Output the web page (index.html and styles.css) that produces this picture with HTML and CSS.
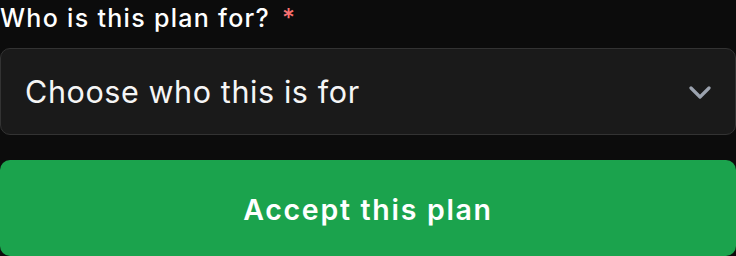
FILE: index.html
```html
<!DOCTYPE html>
<html lang="en">
<head>
    <meta charset="UTF-8" />
    <meta name="viewport" content="width=device-width, initial-scale=1.0"/>
    <title>Choose a plan</title>
    <link rel="stylesheet" href="styles.css">
</head>
<body>
<form class="plan-form">
    <!-- Who field -->
    <div class="field">
        <label class="field-label">Who is this plan for? <span class="required">*</span></label>
        <div class="select-box">
            <span class="select-text">Choose who this is for</span>
            <svg class="chevron" width="22" height="14" viewBox="0 0 22 14">
                <path d="M2 2 L11 11 L20 2" fill="none" stroke="#9ca3af" stroke-width="3.2" stroke-linecap="round" stroke-linejoin="round"/>
            </svg>
        </div>
    </div>

    <button type="button" class="accept-btn">Accept this plan</button>
</form>
</body>
</html>
```

FILE: styles.css
```css
body {
    margin: 0;
    background: #0c0c0c;
    font-family: Inter, "Noto Sans", sans-serif;
    color: #fff;
}

.plan-form {
    display: flex;
    flex-direction: column;
    gap: 25px;
    width: 736px;
}

.field {
    display: flex;
    flex-direction: column;
    gap: 12px;
}

.field-label {
    font-size: 25px;
    font-weight: 500;
    line-height: 36px;
    letter-spacing: 1.3px;
}

.required {
    color: #f87171;
    margin-left: 4px;
}

.select-box {
    height: 85px;
    box-sizing: content-box;
    border: 1px solid #333333;
    border-radius: 10px;
    background: #1a1a1a;
    display: flex;
    align-items: center;
    justify-content: space-between;
    padding: 0 24px 0 24px;
    width: 686px;
}

.select-text {
    font-size: 30.5px;
    font-weight: 400;
    letter-spacing: 0.6px;
    color: #f5f5f5;
}

.chevron {
    margin-top: 2px;
}

.accept-btn {
    height: 96px;
    border: none;
    border-radius: 10px;
    background: #1ba34d;
    color: #fff;
    font-family: Inter, "Noto Sans", sans-serif;
    font-size: 28.5px;
    font-weight: 600;
    letter-spacing: 1.7px;
    width: 736px;
    padding: 2px 0 0 0;
}
```
